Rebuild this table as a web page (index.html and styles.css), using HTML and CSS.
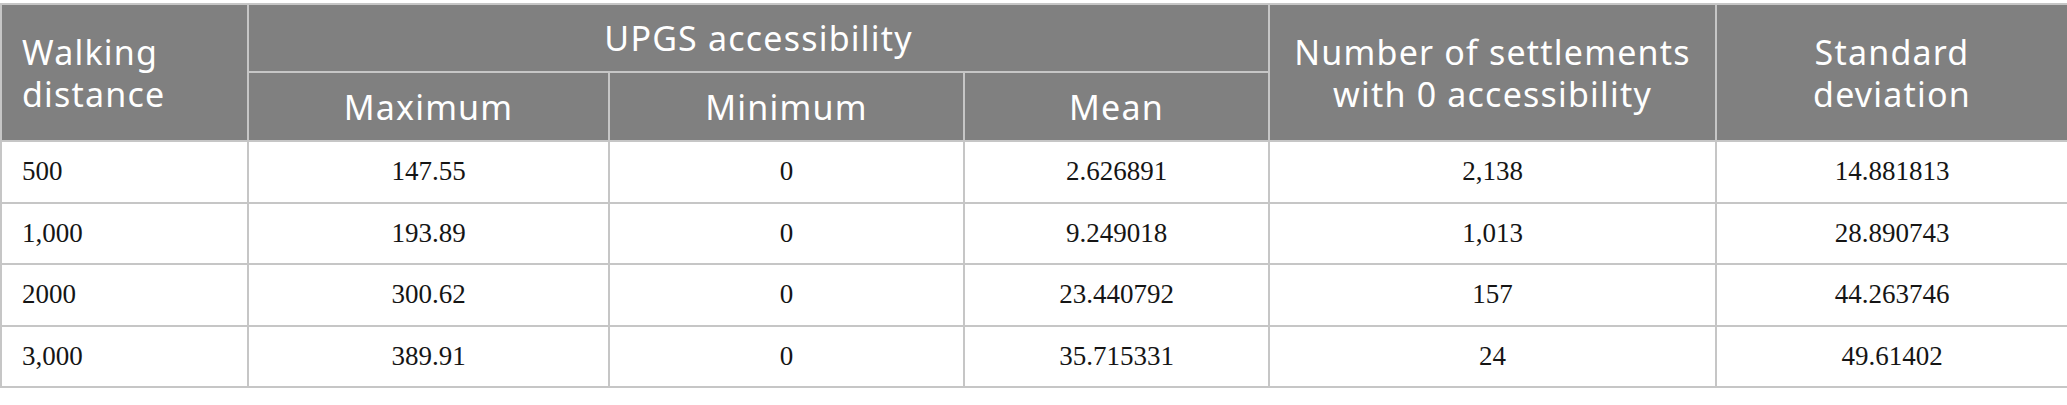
FILE: index.html
```html
<!DOCTYPE html>
<html>
<head>
<meta charset="utf-8">
<link rel="stylesheet" href="styles.css">
</head>
<body>
<table class="data">
  <colgroup>
    <col class="c1"><col class="c2"><col class="c3"><col class="c4"><col class="c5"><col class="c6">
  </colgroup>
  <thead>
    <tr class="h1">
      <th rowspan="2" class="left">Walking<br>distance</th>
      <th colspan="3">UPGS accessibility</th>
      <th rowspan="2">Number of settlements<br>with 0 accessibility</th>
      <th rowspan="2">Standard<br>deviation</th>
    </tr>
    <tr class="h2">
      <th>Maximum</th>
      <th>Minimum</th>
      <th>Mean</th>
    </tr>
  </thead>
  <tbody>
    <tr><td class="left">500</td><td>147.55</td><td>0</td><td>2.626891</td><td>2,138</td><td>14.881813</td></tr>
    <tr><td class="left">1,000</td><td>193.89</td><td>0</td><td>9.249018</td><td>1,013</td><td>28.890743</td></tr>
    <tr><td class="left">2000</td><td>300.62</td><td>0</td><td>23.440792</td><td>157</td><td>44.263746</td></tr>
    <tr><td class="left">3,000</td><td>389.91</td><td>0</td><td>35.715331</td><td>24</td><td>49.61402</td></tr>
  </tbody>
</table>
</body>
</html>
```

FILE: styles.css
```css
html, body {
  margin: 0;
  padding: 0;
  background: #ffffff;
}
body {
  padding-top: 3px;
}
.data {
  width: 2067px;
  border-collapse: collapse;
  table-layout: fixed;
}
.c1 { width: 247px; }
.c2 { width: 361px; }
.c3 { width: 355px; }
.c4 { width: 305px; }
.c5 { width: 447px; }
.c6 { width: 352px; }
.data th,
.data td {
  border: 2px solid #c6c6c6;
  text-align: center;
  vertical-align: middle;
}
.data th {
  background: #808080;
  color: #ffffff;
  font-family: "Noto Sans", "Open Sans", sans-serif;
  font-weight: normal;
  font-size: 34px;
  letter-spacing: 1.2px;
  line-height: 42px;
  padding: 0 20px;
}
.data .h1 th { height: 66px; }
.data .h2 th { height: 67px; }
.data td {
  font-family: "Liberation Serif", "Times New Roman", serif;
  font-size: 27px;
  color: #151515;
  height: 59.5px;
  padding: 0 20px;
}
.data .left {
  text-align: left;
}
```
